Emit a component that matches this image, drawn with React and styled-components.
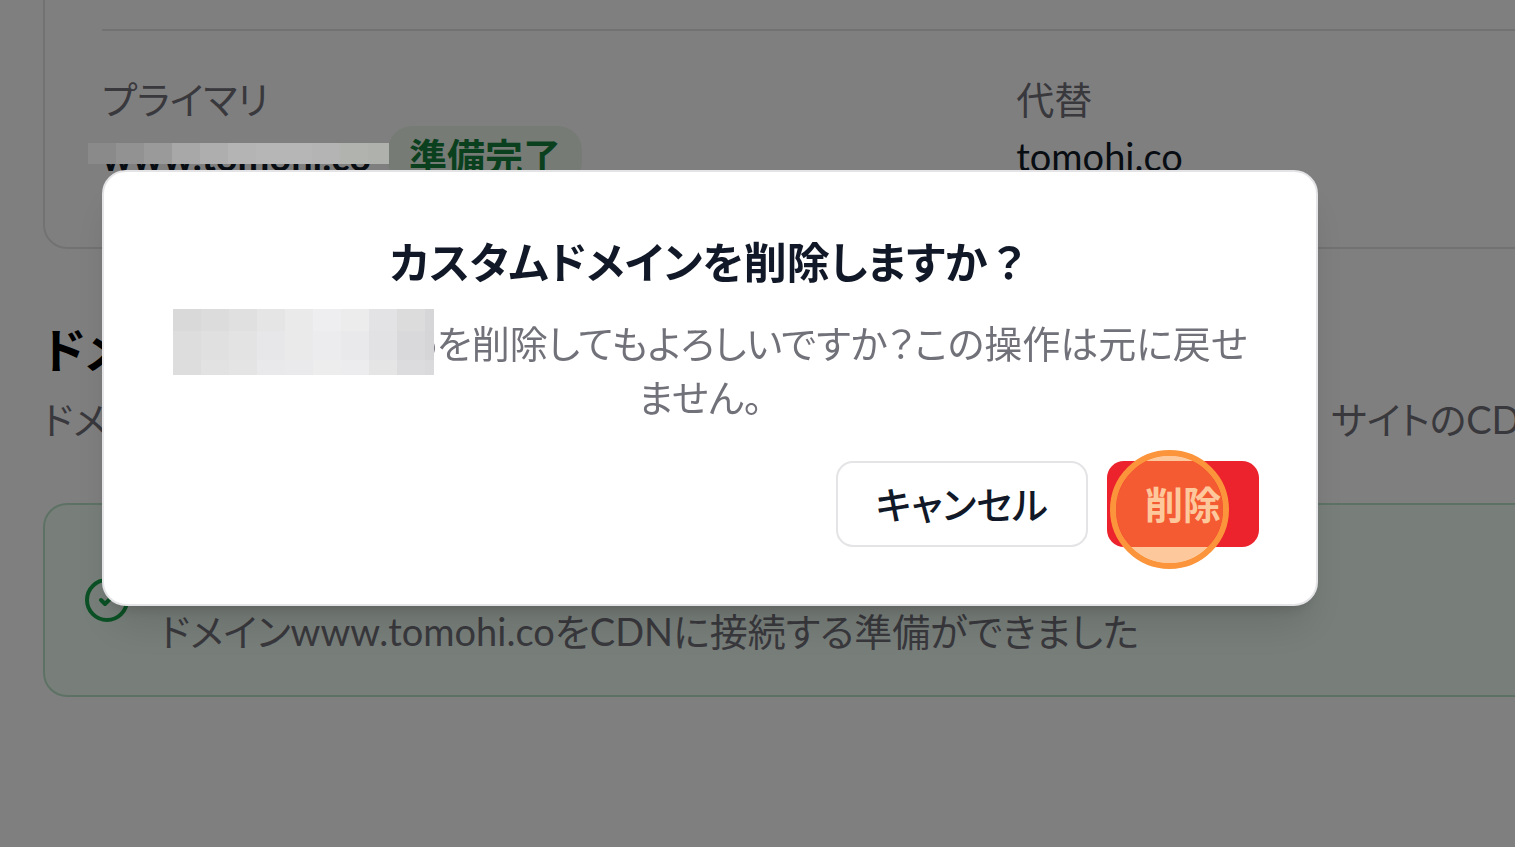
import React from 'react';
import styled, { createGlobalStyle } from 'styled-components';
import { CircleCheck } from 'lucide-react';

const GlobalStyle = createGlobalStyle`
  * { box-sizing: border-box; }
  body {
    margin: 0;
    background: #fff;
    overflow: hidden;
    font-family: Lato, "Noto Sans CJK JP", sans-serif;
    font-feature-settings: "palt";
    font-size: 38px;
    line-height: 54px;
    color: #111827;
  }
  h2, h3, p, dl, dt, dd { margin: 0; }
`;

const Page = styled.main`
  position: relative;
  min-height: 100vh;
  padding-left: 43px;
  overflow: hidden;
`;

const DomainCard = styled.section`
  border: 2px solid #e4e4e7;
  border-width: 0 0 2px 2px;
  border-bottom-left-radius: 24px;
  padding: 29px 0 61px 57px;
`;

const DomainList = styled.dl`
  display: grid;
  grid-template-columns: 11fr 6fr;
  border-top: 2px solid #e4e4e7;
  padding-top: 41px;
`;

const Label = styled.dt`
  color: #71717a;
`;

const Value = styled.dd`
  display: flex;
  align-items: center;
  gap: 17px;
  height: 60px;
  white-space: nowrap;
  font-weight: ${(p) => (p.$strong ? 700 : 400)};
`;

const Badge = styled.span`
  border-radius: 24px;
  padding: 3px 21px;
  background: #edf7ed;
  color: #15803d;
  font-weight: 700;
`;

const Section = styled.section`
  padding-top: 66px;
`;

const SectionTitle = styled.h2`
  font-size: 48px;
  line-height: 70px;
  font-weight: 700;
  color: #000;
`;

const SectionText = styled.p`
  display: grid;
  grid-template-columns: minmax(0, 7fr) minmax(0, 1fr);
  padding-top: 7px;
  white-space: nowrap;
  color: #71717a;
`;

const Alert = styled.div`
  display: flex;
  align-items: center;
  gap: 29px;
  margin-top: 57px;
  padding: 38px;
  height: 194px;
  border: 2px solid #bbe5cb;
  border-right: 0;
  border-radius: 24px 0 0 24px;
  background: #f0fdf4;
  color: #71717a;

  svg { color: #16a34a; flex: none; }
  p { padding-top: 62px; white-space: nowrap; }
`;

const Overlay = styled.div`
  position: fixed;
  inset: 0;
  padding: 170px 197px 0 102px;
  background: rgba(0, 0, 0, 0.5);
`;

const Dialog = styled.div`
  border: 2px solid #e4e4e7;
  border-radius: 24px;
  padding: 57px;
  background: #fff;
  box-shadow: 0 27px 40px -8px rgba(0, 0, 0, 0.12), 0 10px 16px -10px rgba(0, 0, 0, 0.2);
  text-align: center;
`;

const DialogTitle = styled.h3`
  font-size: 43px;
  line-height: 68px;
  font-weight: 700;
`;

const DialogText = styled.p`
  padding: 19px 0 37px;
  color: #71717a;
`;

const FullWidth = styled.span`
  font-feature-settings: normal;
`;

const MaskedDomain = styled.span`
  position: relative;
  display: inline-flex;
  justify-content: flex-end;
  width: 264px;
  height: 54px;
  vertical-align: top;
`;

const Mosaic = styled.svg`
  position: absolute;
  left: ${(p) => p.$left}px;
  top: ${(p) => p.$top}px;
`;

const Actions = styled.div`
  display: flex;
  justify-content: flex-end;
  gap: 19px;
`;

const Button = styled.button`
  position: relative;
  height: 86px;
  padding: 0 38px;
  border: ${(p) => (p.$danger ? '0' : '2px solid #e4e4e7')};
  border-radius: 17px;
  background: ${(p) => (p.$danger ? '#ec222c' : '#fff')};
  color: ${(p) => (p.$danger ? '#fff' : '#111827')};
  font: inherit;
  font-feature-settings: inherit;
  font-weight: ${(p) => (p.$danger ? 700 : 500)};
`;

const ClickRing = styled.span`
  position: absolute;
  left: 3px;
  top: -11px;
  width: 119px;
  height: 119px;
  border: 6px solid #fb943a;
  border-radius: 50%;
  background: rgba(251, 148, 58, 0.5);
  background-clip: padding-box;
`;

const TOP_CELLS = ['#8a8a8a', '#929292', '#9a9a9a', '#a8a8a8', '#aeaeae', '#b4b4b4', '#b6b6b6', '#b6b6b6', '#b4b4b4', '#b1b3af', '#aeb1ac'];

const DIALOG_ROWS = [
  { y: 0, h: 22, cells: ['#d9d9d9', '#dcdcdc', '#e0e0e0', '#e5e5e5', '#eaeaea', '#eeeef0', '#ececec', '#e3e3e5', '#dcdcdc', '#d6d6d8'] },
  { y: 22, h: 29, cells: ['#dddddd', '#e0e0e0', '#e3e3e3', '#e7e7e9', '#eaeaea', '#ececee', '#e9e9eb', '#e2e2e4', '#d9d9db', '#d5d5d7'] },
  { y: 51, h: 15, cells: ['#dddddd', '#e2e2e2', '#e4e4e4', '#e9e9ec', '#eaeaec', '#ededed', '#ececee', '#e5e5e5', '#dcdcde', '#dadadc'] },
];

export default function App() {
  return (
    <>
      <GlobalStyle />
      <Page>
        <DomainCard>
          <DomainList>
            <div>
              <Label>プライマリ</Label>
              <Value $strong>
                www.tomohi.co
                <Badge>準備完了</Badge>
              </Value>
            </div>
            <div>
              <Label>代替</Label>
              <Value>tomohi.co</Value>
            </div>
          </DomainList>
        </DomainCard>
        <Section>
          <SectionTitle>ドメ</SectionTitle>
          <SectionText>
            <span>ドメ</span>
            <span>サイトのCD</span>
          </SectionText>
          <Alert>
            <CircleCheck size={48} />
            <p>ドメインwww.tomohi.coをCDNに接続する準備ができました</p>
          </Alert>
        </Section>
      </Page>
      <Overlay>
        <Mosaic $left={88} $top={143} width="301" height="21" aria-hidden="true">
          {TOP_CELLS.map((fill, i) => (
            <rect key={i} x={i * 28} width="29" height="21" fill={fill} />
          ))}
        </Mosaic>
        <Dialog role="alertdialog" aria-modal="true" aria-labelledby="dialog-title">
          <DialogTitle id="dialog-title">
            カスタムドメインを削除しますか<FullWidth>？</FullWidth>
          </DialogTitle>
          <DialogText>
            <MaskedDomain>
              www.tomohi.co
              <Mosaic $left={0} $top={-7} width="261" height="66" aria-hidden="true">
                {DIALOG_ROWS.map((row) =>
                  row.cells.map((fill, i) => (
                    <rect key={`${row.y}-${i}`} x={i * 28} y={row.y} width="29" height={row.h} fill={fill} />
                  ))
                )}
              </Mosaic>
            </MaskedDomain>
            を削除してもよろしいですか？この操作は元に戻せません<FullWidth>。</FullWidth>
          </DialogText>
          <Actions>
            <Button type="button">キャンセル</Button>
            <Button type="button" $danger>
              削除
              <ClickRing />
            </Button>
          </Actions>
        </Dialog>
      </Overlay>
    </>
  );
}
